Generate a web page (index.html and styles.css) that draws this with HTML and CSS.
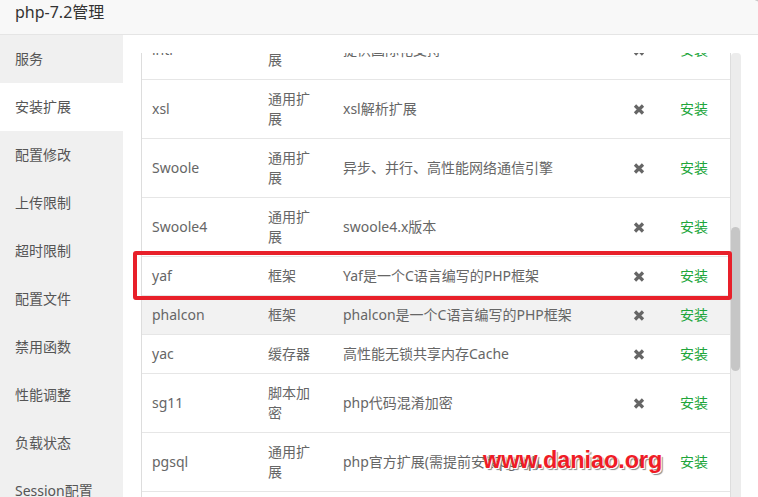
FILE: index.html
```html
<!DOCTYPE html>
<html lang="zh-CN">
<head>
<meta charset="utf-8">
<title>php-7.2管理</title>
<link rel="stylesheet" href="styles.css">
</head>
<body>
<div class="layer">
  <header class="title">php-7.2管理</header>
  <div class="close-dot"></div>
  <div class="main">
    <nav class="side">
      <div class="side-item">服务</div>
      <div class="side-item active">安装扩展</div>
      <div class="side-item">配置修改</div>
      <div class="side-item">上传限制</div>
      <div class="side-item">超时限制</div>
      <div class="side-item">配置文件</div>
      <div class="side-item">禁用函数</div>
      <div class="side-item">性能调整</div>
      <div class="side-item">负载状态</div>
      <div class="side-item">Session配置</div>
    </nav>
    <section class="content">
      <div class="scroll">
        <div class="table-box">
          <table class="ext-table">
            <colgroup>
              <col class="c-name"><col class="c-type"><col class="c-desc"><col class="c-status"><col class="c-op">
            </colgroup>
            <tbody>
              <tr><td>intl</td><td class="type">通用扩展</td><td>提供国际化支持</td><td class="st"><svg class="x" width="12" height="11" viewBox="0 0 12 11"><path d="M2 1.5L10 9.5M10 1.5L2 9.5" stroke="#666" stroke-width="3.2"/></svg></td><td class="op"><a>安装</a></td></tr>
              <tr><td>xsl</td><td class="type">通用扩展</td><td>xsl解析扩展</td><td class="st"><svg class="x" width="12" height="11" viewBox="0 0 12 11"><path d="M2 1.5L10 9.5M10 1.5L2 9.5" stroke="#666" stroke-width="3.2"/></svg></td><td class="op"><a>安装</a></td></tr>
              <tr><td>Swoole</td><td class="type">通用扩展</td><td>异步、并行、高性能网络通信引擎</td><td class="st"><svg class="x" width="12" height="11" viewBox="0 0 12 11"><path d="M2 1.5L10 9.5M10 1.5L2 9.5" stroke="#666" stroke-width="3.2"/></svg></td><td class="op"><a>安装</a></td></tr>
              <tr><td>Swoole4</td><td class="type">通用扩展</td><td>swoole4.x版本</td><td class="st"><svg class="x" width="12" height="11" viewBox="0 0 12 11"><path d="M2 1.5L10 9.5M10 1.5L2 9.5" stroke="#666" stroke-width="3.2"/></svg></td><td class="op"><a>安装</a></td></tr>
              <tr><td>yaf</td><td class="type">框架</td><td>Yaf是一个C语言编写的PHP框架</td><td class="st"><svg class="x" width="12" height="11" viewBox="0 0 12 11"><path d="M2 1.5L10 9.5M10 1.5L2 9.5" stroke="#666" stroke-width="3.2"/></svg></td><td class="op"><a>安装</a></td></tr>
              <tr class="hover"><td>phalcon</td><td class="type">框架</td><td>phalcon是一个C语言编写的PHP框架</td><td class="st"><svg class="x" width="12" height="11" viewBox="0 0 12 11"><path d="M2 1.5L10 9.5M10 1.5L2 9.5" stroke="#666" stroke-width="3.2"/></svg></td><td class="op"><a>安装</a></td></tr>
              <tr><td>yac</td><td class="type">缓存器</td><td>高性能无锁共享内存Cache</td><td class="st"><svg class="x" width="12" height="11" viewBox="0 0 12 11"><path d="M2 1.5L10 9.5M10 1.5L2 9.5" stroke="#666" stroke-width="3.2"/></svg></td><td class="op"><a>安装</a></td></tr>
              <tr><td>sg11</td><td class="type">脚本加密</td><td>php代码混淆加密</td><td class="st"><svg class="x" width="12" height="11" viewBox="0 0 12 11"><path d="M2 1.5L10 9.5M10 1.5L2 9.5" stroke="#666" stroke-width="3.2"/></svg></td><td class="op"><a>安装</a></td></tr>
              <tr><td>pgsql</td><td class="type">通用扩展</td><td>php官方扩展(需提前安装pgsql)</td><td class="st"><svg class="x" width="12" height="11" viewBox="0 0 12 11"><path d="M2 1.5L10 9.5M10 1.5L2 9.5" stroke="#666" stroke-width="3.2"/></svg></td><td class="op"><a>安装</a></td></tr>
              <tr><td>opcache</td><td class="type">缓存器</td><td>用于加速PHP脚本!</td><td class="st"><svg class="x" width="12" height="11" viewBox="0 0 12 11"><path d="M2 1.5L10 9.5M10 1.5L2 9.5" stroke="#666" stroke-width="3.2"/></svg></td><td class="op"><a>安装</a></td></tr>
            </tbody>
          </table>
        </div>
        <div class="track"><div class="thumb"></div></div>
      </div>
    </section>
  </div>
  <div class="mark-box"></div>
  <div class="watermark">www.daniao.org</div>
</div>
</body>
</html>
```
FILE: styles.css
```css
* { box-sizing: border-box; }
html, body { margin: 0; padding: 0; }
body {
  width: 758px;
  height: 497px;
  overflow: hidden;
  background: #fff;
  font-family: "Noto Sans", "Noto Sans CJK SC", sans-serif;
}
.layer {
  position: relative;
  width: 758px;
  height: 497px;
  overflow: hidden;
}
.title {
  height: 35px;
  background: #f8f8f8;
  border-bottom: 1px solid #e5e5e5;
  padding: 0 15px;
  font-size: 16px;
  line-height: 25px;
  color: #333;
}
.close-dot {
  position: absolute;
  left: 748px;
  top: -26px;
  width: 28px;
  height: 28px;
  border-radius: 50%;
  background: #c8c8c8;
}
.main {
  display: flex;
  height: 462px;
}
.side {
  flex: none;
  width: 123px;
  background: #f0f0f0;
}
.side-item {
  height: 48px;
  line-height: 48px;
  padding-left: 15px;
  font-size: 14px;
  color: #555;
  white-space: nowrap;
}
.side-item.active { background: #fff; }
.content {
  flex: 1;
  padding: 18px 17px 0 18px;
  min-width: 0;
}
.scroll {
  display: flex;
  height: 100%;
}
.table-box {
  flex: none;
  width: 590px;
  height: 100%;
  overflow: hidden;
  border-left: 1px solid #ddd;
  border-right: 1px solid #ddd;
}
.ext-table {
  width: 588px;
  margin-top: -32px;
  border-collapse: collapse;
  table-layout: fixed;
  font-size: 14px;
  color: #666;
}
.c-name { width: 116px; }
.c-type { width: 75px; }
.c-desc { width: 290px; }
.c-status { width: 47px; }
.c-op { width: 60px; }
.ext-table td {
  padding: 9px 10px;
  line-height: 20px;
  border-bottom: 1px solid #e6e6e6;
  vertical-align: middle;
}
.ext-table td.type { padding-right: 15px; }
.ext-table tr.hover td { background: #f2f2f2; }
.ext-table td.st { padding-left: 10px; }
.x { display: block; }
.op a { color: #20a53a; }
.track {
  flex: none;
  width: 10px;
  height: 100%;
  background: #ececec;
  border-radius: 4px 4px 0 0;
  padding-top: 174px;
}
.thumb {
  width: 9px;
  height: 144px;
  border-radius: 5px;
  background: #c6c6c6;
}
.mark-box {
  position: absolute;
  left: 133px;
  top: 251px;
  width: 599px;
  height: 49px;
  border: 4px solid #e8202a;
  border-radius: 3px;
}
.watermark {
  position: absolute;
  left: 483px;
  top: 448px;
  font-family: "Liberation Sans", Arial, sans-serif;
  font-weight: bold;
  font-size: 23.5px;
  line-height: 24px;
  letter-spacing: -0.1px;
  color: #f01c26;
  text-shadow: 1px 1px 0 #fff, 2px 2px 1px #8a8a8a;
  white-space: nowrap;
}
```
